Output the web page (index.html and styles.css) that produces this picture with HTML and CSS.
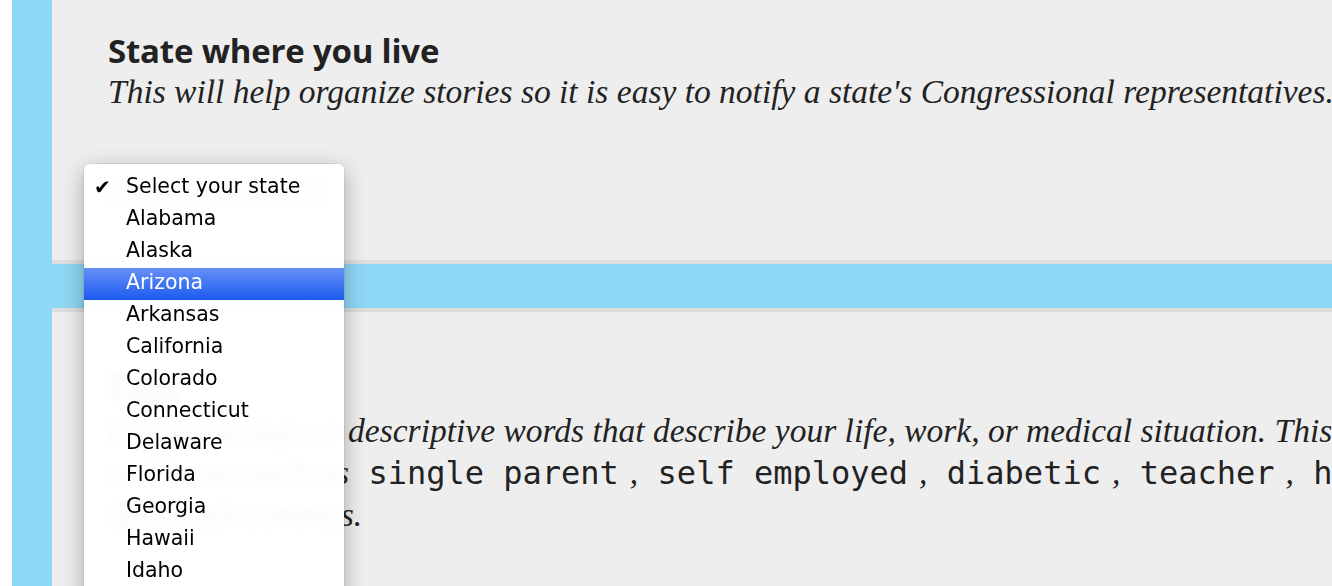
FILE: index.html
```html
<!DOCTYPE html>
<html lang="en">
<head>
<meta charset="utf-8">
<title>Share your story</title>
<link rel="stylesheet" href="styles.css">
</head>
<body>
<div class="page">
  <div class="rail">
    <section class="card card-state">
      <h2 class="field-title">State where you live</h2>
      <p class="field-help">This will help organize stories so it is easy to notify a state's Congressional representatives.</p>
      <div class="select-wrap">
        <div class="select-box">Select your state</div>
        <ul class="menu">
          <li class="menu-item checked"><span class="check">✔</span>Select your state</li>
          <li class="menu-item">Alabama</li>
          <li class="menu-item">Alaska</li>
          <li class="menu-item active">Arizona</li>
          <li class="menu-item">Arkansas</li>
          <li class="menu-item">California</li>
          <li class="menu-item">Colorado</li>
          <li class="menu-item">Connecticut</li>
          <li class="menu-item">Delaware</li>
          <li class="menu-item">Florida</li>
          <li class="menu-item">Georgia</li>
          <li class="menu-item">Hawaii</li>
          <li class="menu-item">Idaho</li>
          <li class="menu-item">Illinois</li>
        </ul>
      </div>
    </section>
    <section class="card card-tags">
      <h2 class="field-title">Tags</h2>
      <p class="field-help">
        <span class="line">Use some tags or descriptive words that describe your life, work, or medical situation. This will help us organize stories.</span>
        <span class="line">and terms such as <code>single parent</code>, <code>self employed</code>, <code>diabetic</code>, <code>teacher</code>, <code>homeless</code></span>
        <span class="line">Split with commas.</span>
      </p>
    </section>
  </div>
</div>
</body>
</html>
```
FILE: styles.css
```css
html, body {
  margin: 0;
  padding: 0;
  overflow: hidden;
  background: #ffffff;
}

body {
  font-family: "Open Sans", "Liberation Sans", sans-serif;
  color: #222222;
}

.page {
  padding-left: 12px;
  height: 586px;
  overflow: hidden;
}

.rail {
  background: #8fd8f5;
  padding-left: 40px;
  margin-top: -25px;
  display: flex;
  flex-direction: column;
  gap: 44px;
  width: 1600px;
  min-height: 660px;
}

.card {
  position: relative;
  background: #eeeeee;
  border-top: 4px solid #dddddd;
  border-bottom: 4px solid #dddddd;
  padding: 52px 0 50px 56px;
}

.card-tags {
  padding-top: 55px;
}

.field-title {
  margin: 0;
  font-family: "Open Sans", sans-serif;
  font-weight: 700;
  font-size: 33px;
  line-height: 40px;
  color: #222222;
  letter-spacing: -0.2px;
}

.field-help {
  margin: 0;
  font-family: "Liberation Serif", serif;
  font-style: italic;
  font-size: 33.5px;
  line-height: 42px;
  color: #222222;
  white-space: nowrap;
}

.card-tags .field-help {
  margin-top: 3px;
}

.line {
  display: block;
}

code {
  font-family: "DejaVu Sans Mono", monospace;
  font-style: normal;
  font-size: 32px;
  padding: 0 11px;
  color: #222222;
}

.select-wrap {
  position: relative;
  margin-top: 63px;
  width: 226px;
  margin-left: -4px;
}

.select-box {
  height: 34px;
  border-radius: 4px;
  background: #e2e2e2;
  font-family: "DejaVu Sans", sans-serif;
  font-size: 20px;
  line-height: 34px;
  padding-left: 22px;
  color: #555;
}

.menu {
  position: absolute;
  top: -12px;
  left: -20px;
  width: 260px;
  margin: 0;
  padding: 8px 0 0;
  list-style: none;
  background: rgba(255, 255, 255, 0.97);
  -webkit-backdrop-filter: blur(3px);
  backdrop-filter: blur(3px);
  border-radius: 6px;
  box-shadow: 0 6px 22px rgba(0, 0, 0, 0.3), 0 0 0 1px rgba(0, 0, 0, 0.06);
  z-index: 2;
}

.menu-item {
  position: relative;
  height: 28px;
  line-height: 28px;
  padding: 0 0 4px 42px;
  font-family: "DejaVu Sans", sans-serif;
  font-size: 20.5px;
  color: #000000;
}

.check {
  position: absolute;
  left: 10px;
  top: 1px;
  font-size: 20px;
}

.menu-item.active {
  background: linear-gradient(#6690f6, #1c5bf0);
  color: #ffffff;
}
```
